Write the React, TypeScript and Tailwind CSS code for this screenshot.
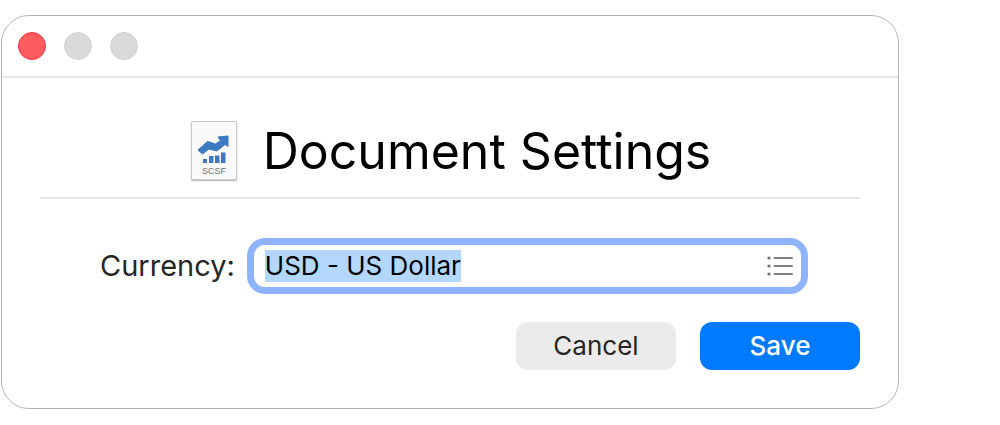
import { useEffect, useRef, useState } from "react";

function DocumentIcon() {
  return (
    <svg viewBox="0 0 50 64" className="h-16 w-[50px] shrink-0" aria-hidden="true">
      <rect x="1" y="3" width="48" height="60" rx="3" fill="#000" opacity="0.06" />
      <rect x="2" y="3" width="46" height="59" rx="2" fill="#000" opacity="0.2" />
      <rect x="2" y="2" width="46" height="59" rx="2" fill="#c8c8c8" />
      <rect x="3" y="3" width="44" height="57" rx="1" fill="#fafafa" />
      <path
        d="M9 31 18.500 22.500 26.500 25 31.500 21.500 29 18 39 17V27.500L36 25.500 28 32 20 30 13.500 35Z"
        fill="#3d7abf"
        stroke="#3d7abf"
        strokeLinejoin="round"
      />
      <path
        d="M14 40h4v4h-4zM20 37h4.500v7H20zM26 36.500h4.500v7.500H26zM32 33.500h4.500V44H32z"
        fill="#3d7abf"
      />
      <text
        x="25"
        y="55"
        textAnchor="middle"
        fontSize="9"
        fontFamily="Liberation Sans, sans-serif"
        fill="#707070"
      >
        SCSF
      </text>
    </svg>
  );
}

function ListIcon() {
  return (
    <svg viewBox="0 0 26 20" className="h-5 w-[26px]" aria-hidden="true">
      {[2, 10, 18].map((y) => (
        <g key={y}>
          <circle cx="2" cy={y} r="1.600" fill="#707070" />
          <path d={`M7.500 ${y}H25`} stroke="#808080" strokeWidth="2" strokeLinecap="round" />
        </g>
      ))}
    </svg>
  );
}

export default function App() {
  const [currency, setCurrency] = useState("USD - US Dollar");
  const input = useRef<HTMLInputElement>(null);

  // Open with the current value selected so typing replaces it.
  useEffect(() => {
    input.current?.focus();
    input.current?.select();
  }, []);

  return (
    <div className="bg-white pt-[15px] pr-[101px] pb-4 pl-px font-['Inter',sans-serif] text-[#262626]">
      <main className="rounded-[28px] border border-[#b4b4b4] bg-white">
        <div className="flex h-[62px] items-center gap-[18px] border-b-2 border-[#e5e5e5] px-4">
          <button
            type="button"
            aria-label="Close"
            className="size-7 rounded-full border border-[#f5333f] bg-[#ff5c60]"
          />
          <button
            type="button"
            aria-label="Minimize"
            disabled
            className="size-7 rounded-full border border-[#d1d1d1] bg-[#dadada]"
          />
          <button
            type="button"
            aria-label="Zoom"
            disabled
            className="size-7 rounded-full border border-[#d1d1d1] bg-[#dadada]"
          />
        </div>

        <form className="px-[38px] pb-[38px]" onSubmit={(e) => e.preventDefault()}>
          <header className="flex items-center justify-center gap-6 border-b-2 border-[#e5e5e5] pt-[41px] pb-3.5">
            <DocumentIcon />
            <h1 className="text-[50px] leading-[64px] whitespace-nowrap text-black">
              Document Settings
            </h1>
          </header>

          <div className="flex items-center gap-3 pt-[39px] pr-[52px] pl-[60px]">
            <label htmlFor="currency" className="text-[29px] leading-8">
              Currency:
            </label>
            <div className="flex h-14 min-w-0 flex-1 items-center rounded-[18px] border-7 border-[#8fb3fe] pr-2 pl-[11px]">
              <input
                ref={input}
                id="currency"
                type="text"
                value={currency}
                onChange={(e) => setCurrency(e.target.value)}
                className="h-8 min-w-0 flex-1 text-[26px] leading-8 text-black outline-none selection:bg-[#b3d7ff] selection:text-black"
              />
              <button type="button" aria-label="Show currencies">
                <ListIcon />
              </button>
            </div>
          </div>

          <div className="flex justify-end gap-6 pt-7">
            <button
              type="button"
              className="h-12 w-40 rounded-xl bg-[#ebebeb] text-[26px] leading-8"
            >
              Cancel
            </button>
            <button
              type="submit"
              className="h-12 w-40 rounded-xl bg-[#007aff] text-[26px] leading-8 font-medium text-white"
            >
              Save
            </button>
          </div>
        </form>
      </main>
    </div>
  );
}
